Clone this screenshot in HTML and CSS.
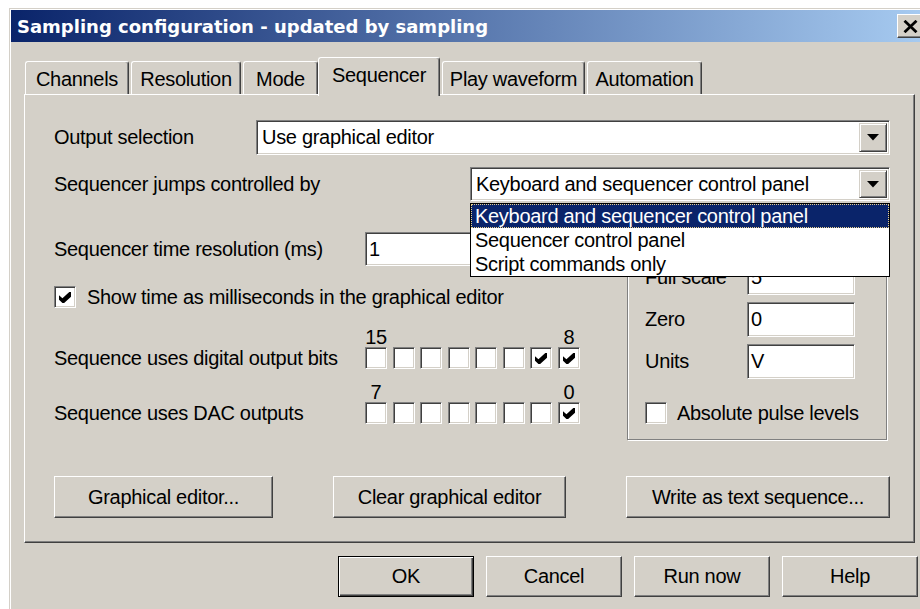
FILE: index.html
```html
<!DOCTYPE html>
<html>
<head>
<meta charset="utf-8">
<title>Sampling configuration</title>
<link rel="stylesheet" href="styles.css">
</head>
<body>
<div class="window">
  <div class="titlebar">
    <span class="title">Sampling configuration - updated by sampling</span>
    <span class="close-btn">
      <svg width="15" height="13" viewBox="0 0 15 13"><path d="M1.5 0.8 L13.5 12.2 M13.5 0.8 L1.5 12.2" stroke="#000" stroke-width="2.8" fill="none"/></svg>
    </span>
  </div>
  <div class="client">
    <div class="tabs">
      <div class="tab tab-channels">Channels</div>
      <div class="tab tab-resolution">Resolution</div>
      <div class="tab tab-mode">Mode</div>
      <div class="tab tab-sequencer active">Sequencer</div>
      <div class="tab tab-play">Play waveform</div>
      <div class="tab tab-automation">Automation</div>
    </div>

    <div class="panel">
      <div class="row row-output">
        <span class="label label-output">Output selection</span>
        <div class="combo combo-output">
          <span class="combo-text">Use graphical editor</span>
          <span class="combo-btn"><svg width="12" height="7" viewBox="0 0 12 7"><polygon points="0,0 12,0 6,6.5" fill="#000"/></svg></span>
        </div>
      </div>

      <div class="row row-jumps">
        <span class="label">Sequencer jumps controlled by</span>
        <div class="combo combo-jumps">
          <span class="combo-text">Keyboard and sequencer control panel</span>
          <span class="combo-btn"><svg width="12" height="7" viewBox="0 0 12 7"><polygon points="0,0 12,0 6,6.5" fill="#000"/></svg></span>
          <ul class="listbox">
            <li class="selected">Keyboard and sequencer control panel</li>
            <li>Sequencer control panel</li>
            <li>Script commands only</li>
          </ul>
        </div>
      </div>

      <div class="middle">
        <div class="left-col">
          <div class="row row-resolution">
            <span class="label label-wide">Sequencer time resolution (ms)</span>
            <span class="field field-resolution">1</span>
          </div>

          <div class="check-row row-ms">
            <span class="checkbox"><svg width="12" height="11" viewBox="0 0 7 7" preserveAspectRatio="none"><path d="M0 2 L2 4 L6 0 L7 0 L7 3 L3 7 L2 7 L0 5 Z" fill="#000"/></svg></span>
            <span>Show time as milliseconds in the graphical editor</span>
          </div>

          <div class="bits bits-digital">
            <div class="bit-nums"><span>15</span><span>8</span></div>
            <span class="label bits-label">Sequence uses digital output bits</span>
            <div class="bit-boxes">
              <span class="checkbox"></span>
              <span class="checkbox"></span>
              <span class="checkbox"></span>
              <span class="checkbox"></span>
              <span class="checkbox"></span>
              <span class="checkbox"></span>
              <span class="checkbox"><svg width="12" height="11" viewBox="0 0 7 7" preserveAspectRatio="none"><path d="M0 2 L2 4 L6 0 L7 0 L7 3 L3 7 L2 7 L0 5 Z" fill="#000"/></svg></span>
              <span class="checkbox"><svg width="12" height="11" viewBox="0 0 7 7" preserveAspectRatio="none"><path d="M0 2 L2 4 L6 0 L7 0 L7 3 L3 7 L2 7 L0 5 Z" fill="#000"/></svg></span>
            </div>
          </div>

          <div class="bits bits-dac">
            <div class="bit-nums"><span>7</span><span>0</span></div>
            <span class="label bits-label">Sequence uses DAC outputs</span>
            <div class="bit-boxes">
              <span class="checkbox"></span>
              <span class="checkbox"></span>
              <span class="checkbox"></span>
              <span class="checkbox"></span>
              <span class="checkbox"></span>
              <span class="checkbox"></span>
              <span class="checkbox"></span>
              <span class="checkbox"><svg width="12" height="11" viewBox="0 0 7 7" preserveAspectRatio="none"><path d="M0 2 L2 4 L6 0 L7 0 L7 3 L3 7 L2 7 L0 5 Z" fill="#000"/></svg></span>
            </div>
          </div>
        </div>

        <div class="group">
          <div class="group-row">
            <span class="group-label">Full scale</span>
            <span class="field field-small">5</span>
          </div>
          <div class="group-row">
            <span class="group-label">Zero</span>
            <span class="field field-small">0</span>
          </div>
          <div class="group-row">
            <span class="group-label">Units</span>
            <span class="field field-small">V</span>
          </div>
          <div class="check-row group-check">
            <span class="checkbox"></span>
            <span>Absolute pulse levels</span>
          </div>
        </div>
      </div>

      <div class="panel-buttons">
        <span class="btn btn-graph">Graphical editor...</span>
        <span class="btn btn-clear">Clear graphical editor</span>
        <span class="btn btn-write">Write as text sequence...</span>
      </div>
    </div>

    <div class="dialog-buttons">
      <span class="btn btn-dialog default">OK</span>
      <span class="btn btn-dialog">Cancel</span>
      <span class="btn btn-dialog">Run now</span>
      <span class="btn btn-dialog">Help</span>
    </div>
  </div>
</div>
</body>
</html>
```

FILE: styles.css
```css
* {
  box-sizing: border-box;
}

html,
body {
  margin: 0;
  padding: 0;
  width: 920px;
  height: 609px;
  overflow: hidden;
  background: #fff;
}

body {
  font-family: "Liberation Sans", Arial, sans-serif;
  font-size: 20px;
  letter-spacing: -0.3px;
  color: #000;
}

/* ---------- window frame (continues past the right and bottom edges) ---------- */
.window {
  margin: 8px 0 0 9px;
  width: 911px;
  height: 601px;
  overflow: hidden;
  background: #d4d0c8;
  border-top: 1px solid #d4d0c8;
  border-left: 1px solid #d4d0c8;
  padding: 1px 0 0 1px;
  box-shadow: inset 1px 1px 0 #fff;
}

.titlebar {
  display: flex;
  align-items: center;
  height: 32px;
  padding-left: 6px;
  background: linear-gradient(to right, #0a246a, #a6caf0);
}

.title {
  flex: 1;
  color: #fff;
  font-family: "DejaVu Sans", sans-serif;
  font-weight: bold;
  font-size: 18px;
  letter-spacing: 0;
  white-space: nowrap;
}

.close-btn {
  flex: none;
  width: 26px;
  height: 24px;
  margin-right: -3px;
  display: flex;
  align-items: center;
  justify-content: center;
  background: #d4d0c8;
  border: 1px solid;
  border-color: #fff #404040 #404040 #fff;
  box-shadow: inset -1px -1px 0 #808080;
}

.client {
  padding: 15px 5px 0 13px;
}

/* ---------- tab strip ---------- */
.tabs {
  position: relative;
  z-index: 1;
  display: flex;
  align-items: flex-end;
  height: 37px;
  padding-left: 1px;
}

.tab {
  flex: none;
  height: 33px;
  display: flex;
  align-items: center;
  justify-content: center;
  padding-top: 3px;
  margin-right: 2px;
  background: #d4d0c8;
  border-top: 1px solid #fff;
  border-left: 1px solid #fff;
  border-right: 1px solid #404040;
  box-shadow: inset -1px 0 0 #808080;
  border-radius: 3px 3px 0 0;
  white-space: nowrap;
}

.tab-channels { width: 104px; }
.tab-resolution { width: 110px; }
.tab-mode { width: 75px; margin-right: 0; }
.tab-sequencer { width: 122px; }
.tab-play { width: 143px; }
.tab-automation { width: 115px; }

.tab.active {
  height: 39px;
  margin-bottom: -2px;
  padding-top: 0;
  padding-bottom: 4px;
}

/* ---------- tab page ---------- */
.panel {
  display: flex;
  flex-direction: column;
  height: 449px;
  padding: 25px 24px 0 29px;
  background: #d4d0c8;
  border: 1px solid;
  border-color: #fff #404040 #404040 #fff;
  box-shadow: inset -1px -1px 0 #808080;
}

.row {
  display: flex;
  align-items: center;
}

.label {
  white-space: nowrap;
}

.row-output {
  height: 35px;
}

.label-output {
  width: 202px;
}

.combo-output {
  width: 634px;
}

.row-jumps {
  height: 34px;
  margin-top: 12px;
  justify-content: space-between;
}

.combo-jumps {
  width: 420px;
}

/* sunken combo box */
.combo {
  position: relative;
  display: flex;
  align-items: center;
  height: 100%;
  padding: 2px;
  background: #fff;
  border: 1px solid;
  border-color: #808080 #fff #fff #808080;
  box-shadow: inset 1px 1px 0 #404040, inset -1px -1px 0 #d4d0c8;
}

.combo-text {
  flex: 1;
  padding-left: 3px;
  white-space: nowrap;
}

.combo-btn {
  width: 28px;
  height: 100%;
  display: flex;
  align-items: center;
  justify-content: center;
  background: #d4d0c8;
  border: 1px solid;
  border-color: #d4d0c8 #404040 #404040 #d4d0c8;
  box-shadow: inset 1px 1px 0 #fff, inset -1px -1px 0 #808080;
}

/* open drop-down list */
.listbox {
  position: absolute;
  left: -1px;
  top: 35px;
  z-index: 5;
  width: 420px;
  margin: 0;
  padding: 0;
  list-style: none;
  background: #fff;
  border: 1px solid #000;
}

.listbox li {
  height: 24px;
  line-height: 22px;
  padding-left: 3px;
  border: 1px solid transparent;
  white-space: nowrap;
}

.listbox li.selected {
  background: #0a246a;
  color: #fff;
  border: 1px dotted #e8d08c;
}

/* ---------- middle section ---------- */
.middle {
  display: flex;
  align-items: flex-start;
  height: 208px;
  margin-top: 31px;
}

.left-col {
  flex: 1;
}

.row-resolution {
  height: 34px;
}

.label-wide {
  width: 311px;
}

.field {
  display: flex;
  align-items: center;
  padding-left: 3px;
  background: #fff;
  border: 1px solid;
  border-color: #808080 #fff #fff #808080;
  box-shadow: inset 1px 1px 0 #404040, inset -1px -1px 0 #d4d0c8;
}

.field-resolution {
  width: 235px;
  height: 34px;
}

.check-row {
  display: flex;
  align-items: center;
  gap: 11px;
  height: 22px;
  white-space: nowrap;
}

.row-ms {
  margin-top: 20px;
}

.checkbox {
  flex: none;
  width: 22px;
  height: 22px;
  display: inline-flex;
  align-items: center;
  justify-content: center;
  padding-top: 1px;
  background: #fff;
  border: 1px solid;
  border-color: #808080 #fff #fff #808080;
  box-shadow: inset 1px 1px 0 #404040, inset -1px -1px 0 #d4d0c8;
}

/* bit selector blocks */
.bits {
  display: grid;
  grid-template-columns: 311px 215px;
  grid-template-rows: 20px 22px;
}

.bits-digital {
  margin-top: 19px;
}

.bits-dac {
  margin-top: 13px;
}

.bit-nums {
  grid-column: 2;
  grid-row: 1;
  display: flex;
  justify-content: space-between;
  line-height: 20px;
}

.bit-nums span {
  width: 22px;
  text-align: center;
}

.bits-label {
  grid-column: 1;
  grid-row: 2;
  align-self: center;
}

.bit-boxes {
  grid-column: 2;
  grid-row: 2;
  display: flex;
  justify-content: space-between;
}

/* group box on the right */
.group {
  width: 260px;
  height: 208px;
  margin-right: 3px;
  padding: 27px 0 0 17px;
  border: 1px solid #808080;
  box-shadow: inset 1px 1px 0 #fff, 1px 1px 0 #fff;
}

.group-row {
  display: flex;
  align-items: center;
  height: 35px;
  margin-bottom: 7px;
}

.group-label {
  width: 102px;
  white-space: nowrap;
}

.field-small {
  width: 108px;
  height: 35px;
}

.group-check {
  margin-top: 23px;
  gap: 10px;
}

/* ---------- buttons ---------- */
.btn {
  flex: none;
  display: flex;
  align-items: center;
  justify-content: center;
  background: #d4d0c8;
  border: 1px solid;
  border-color: #fff #404040 #404040 #fff;
  box-shadow: inset -1px -1px 0 #808080;
  white-space: nowrap;
}

.panel-buttons {
  display: flex;
  justify-content: space-between;
  height: 42px;
  margin-top: 36px;
}

.btn-graph { width: 219px; }
.btn-clear { width: 233px; }
.btn-write { width: 264px; }

.dialog-buttons {
  display: flex;
  justify-content: flex-end;
  gap: 12px;
  margin-top: 13px;
  margin-right: -3px;
}

.btn-dialog {
  width: 136px;
  height: 41px;
}

.btn.default {
  border: 1px solid #000;
  box-shadow: inset 1px 1px 0 #fff, inset -1px -1px 0 #404040, inset -2px -2px 0 #808080;
}
```
